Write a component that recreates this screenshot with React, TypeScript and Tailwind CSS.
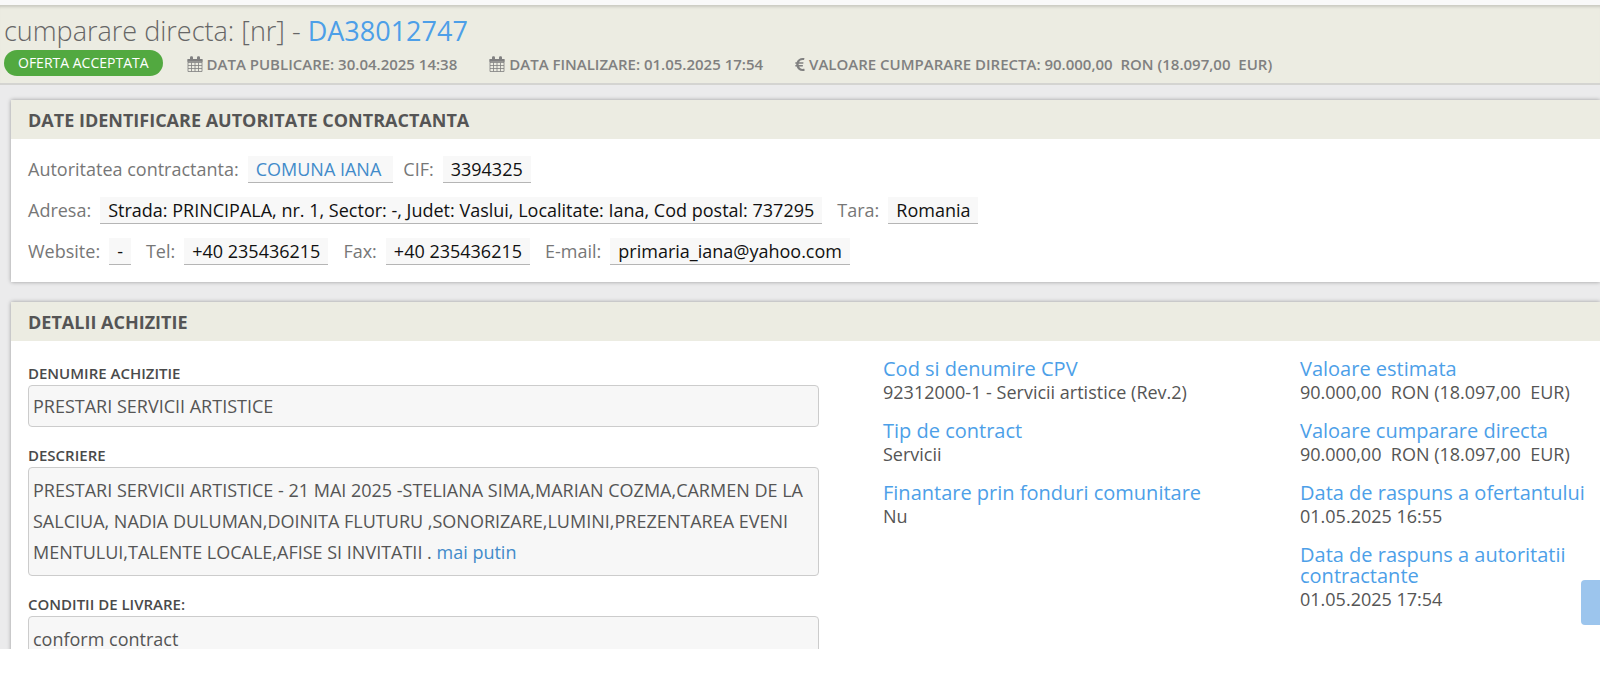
import type { ReactNode } from "react";
import { FaEuroSign } from "react-icons/fa";

function CalendarIcon() {
  return (
    <svg className="size-4 shrink-0" viewBox="0 0 16 16" fill="none" aria-hidden="true">
      <path
        d="M1 3.5h14v12H1z M1 6.5h14 M1 9.5h14 M1 12.5h14 M4.5 6.5v9 M8 6.5v9 M11.5 6.5v9"
        stroke="currentColor"
        strokeWidth="0.8"
      />
      <path d="M0.5 3h15v2.8h-15z" fill="currentColor" />
      <rect x="3" y="0.3" width="3" height="4.2" rx="1.2" fill="currentColor" />
      <rect x="10" y="0.3" width="3" height="4.2" rx="1.2" fill="currentColor" />
    </svg>
  );
}

function Meta({ icon, children }: { icon: ReactNode; children: ReactNode }) {
  return (
    <li className="flex items-center gap-1 whitespace-pre">
      {icon}
      <span>{children}</span>
    </li>
  );
}

function Card({ title, children }: { title: string; children: ReactNode }) {
  return (
    <section className="bg-white shadow-[0_0_4px_rgba(0,0,0,0.35)]">
      <h2 className="bg-[#ecece2] px-[17px] pt-1.5 pb-[5px] text-lg leading-7 font-bold text-[#555]">
        {title}
      </h2>
      {children}
    </section>
  );
}

function Field({ label, children }: { label: string; children: ReactNode }) {
  return (
    <div className="flex items-start gap-[9px]">
      <dt className="text-[#777]">{label}</dt>
      <dd className="border-b border-[#b5b5b5] bg-[#f8f8f8] px-2 text-[#111]">{children}</dd>
    </div>
  );
}

function Box({ label, children }: { label: string; children: ReactNode }) {
  return (
    <div>
      <dt className="text-[15px] leading-6 font-semibold text-[#4a4a4a]">{label}</dt>
      <dd className="rounded-sm border border-[#ccc] bg-[#f7f7f7] px-1 text-lg text-[#555]">
        {children}
      </dd>
    </div>
  );
}

function Detail({ label, children }: { label: string; children: ReactNode }) {
  return (
    <div>
      <dt className="mb-px text-xl leading-[21px] text-[#4d9fe8]">{label}</dt>
      <dd className="text-lg leading-6 whitespace-pre text-[#555]">{children}</dd>
    </div>
  );
}

export default function App() {
  return (
    <div className="h-screen overflow-hidden bg-white pb-[26px] font-['Open_Sans',sans-serif]">
      <div className="h-full overflow-hidden bg-[#ebebec]">
        <header className="border-t-[5px] border-b-2 border-t-[#f9f9f9] border-b-[#d4d4d1] bg-[#ecece2] px-1 pt-2 pb-[5px] shadow-[inset_0_4px_3px_-2px_rgba(0,0,0,0.15)]">
          <h1 className="mb-px text-[27px] leading-9 font-light text-[#666]">
            cumparare directa: [nr] -{" "}
            <a className="font-normal text-[#4d9fe8]" href="#">
              DA38012747
            </a>
          </h1>
          <div className="flex items-start gap-6">
            <span className="rounded-full bg-[#52a940] px-3.5 text-sm leading-[26px] font-medium text-white">
              OFERTA ACCEPTATA
            </span>
            <ul className="flex gap-8 text-[15px] leading-7 font-semibold text-[#808080]">
              <Meta icon={<CalendarIcon />}>DATA PUBLICARE: 30.04.2025 14:38</Meta>
              <Meta icon={<CalendarIcon />}>DATA FINALIZARE: 01.05.2025 17:54</Meta>
              <Meta icon={<FaEuroSign className="w-2.5" />}>
                VALOARE CUMPARARE DIRECTA: 90.000,00{"  "}RON (18.097,00{"  "}EUR)
              </Meta>
            </ul>
          </div>
        </header>

        <main className="grid gap-5 pt-[15px] pl-[11px]">
          <Card title="DATE IDENTIFICARE AUTORITATE CONTRACTANTA">
            <dl className="grid gap-3.5 p-[17px] text-lg leading-[26px]">
              <div className="flex gap-2.5">
                <Field label="Autoritatea contractanta:">
                  <a className="pr-1 text-[#428bca]" href="#">
                    COMUNA IANA
                  </a>
                </Field>
                <Field label="CIF:">3394325</Field>
              </div>
              <div className="flex gap-[15px]">
                <Field label="Adresa:">
                  Strada: PRINCIPALA, nr. 1, Sector: -, Judet: Vaslui, Localitate: Iana, Cod
                  postal: 737295
                </Field>
                <Field label="Tara:">Romania</Field>
              </div>
              <div className="flex gap-[15px]">
                <Field label="Website:">-</Field>
                <Field label="Tel:">+40 235436215</Field>
                <Field label="Fax:">+40 235436215</Field>
                <Field label="E-mail:">primaria_iana@yahoo.com</Field>
              </div>
            </dl>
          </Card>

          <Card title="DETALII ACHIZITIE">
            <div className="grid grid-cols-[855fr_417fr_300fr] pl-[17px]">
              <dl className="mr-16 grid gap-4 pt-5">
                <Box label="DENUMIRE ACHIZITIE">
                  <p className="leading-10">PRESTARI SERVICII ARTISTICE</p>
                </Box>
                <Box label="DESCRIERE">
                  <p className="py-[7px] leading-[31px] whitespace-nowrap">
                    PRESTARI SERVICII ARTISTICE - 21 MAI 2025 -STELIANA SIMA,MARIAN COZMA,CARMEN DE LA
                    <br />
                    SALCIUA, NADIA DULUMAN,DOINITA FLUTURU ,SONORIZARE,LUMINI,PREZENTAREA EVENI
                    <br />
                    MENTULUI,TALENTE LOCALE,AFISE SI INVITATII .{" "}
                    <a className="text-[#428bca]" href="#">
                      mai putin
                    </a>
                  </p>
                </Box>
                <Box label="CONDITII DE LIVRARE:">
                  <p className="py-[7px] leading-[31px]">conform contract</p>
                </Box>
              </dl>

              <dl className="grid content-start gap-4 pt-[17px]">
                <Detail label="Cod si denumire CPV">92312000-1 - Servicii artistice (Rev.2)</Detail>
                <Detail label="Tip de contract">Servicii</Detail>
                <Detail label="Finantare prin fonduri comunitare">Nu</Detail>
              </dl>

              <dl className="grid content-start gap-4 pt-[17px]">
                <Detail label="Valoare estimata">90.000,00{"  "}RON (18.097,00{"  "}EUR)</Detail>
                <Detail label="Valoare cumparare directa">
                  90.000,00{"  "}RON (18.097,00{"  "}EUR)
                </Detail>
                <Detail label="Data de raspuns a ofertantului">01.05.2025 16:55</Detail>
                <Detail label="Data de raspuns a autoritatii contractante">01.05.2025 17:54</Detail>
              </dl>
            </div>
          </Card>
        </main>
      </div>

      {/* scroll to top, sits over the right edge */}
      <button
        type="button"
        aria-label="Sus"
        className="fixed right-0 bottom-[50px] h-[45px] w-[19px] rounded-l-sm bg-[#9cc5ed]"
      />
    </div>
  );
}
